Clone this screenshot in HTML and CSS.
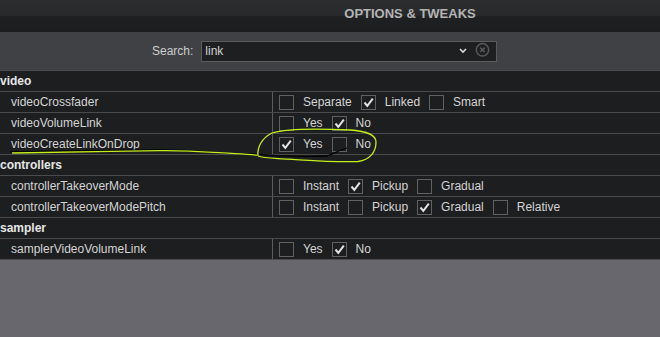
FILE: index.html
```html
<!DOCTYPE html>
<html lang="en">
<head>
    <meta charset="UTF-8">
    <meta name="viewport" content="width=device-width, initial-scale=1.0">
    <title>Options &amp; Tweaks</title>
    <link rel="stylesheet" href="styles.css">
</head>
<body>
    <div class="header">
        <span class="title">OPTIONS &amp; TWEAKS</span>
    </div>

    <div class="search">
        <label for="query" class="search-label">Search:</label>
        <div class="search-box">
            <span class="query" id="query">link</span>
            <svg class="chevron" width="8" height="19" viewBox="0 0 8 19">
                <path d="M1 7 L4 10 L7 7" fill="none" stroke="#d8d8d8" stroke-width="1.6"/>
            </svg>
            <svg class="clear" width="15" height="19" viewBox="0 0 15 19">
                <circle cx="7.5" cy="7.8" r="6.2" fill="none" stroke="#58595b" stroke-width="1.5"/>
                <path d="M5.3 5.6 L9.7 10 M9.7 5.6 L5.3 10" stroke="#58595b" stroke-width="1.6"/>
            </svg>
        </div>
    </div>

    <div class="list">
        <div class="group">video</div>
        <div class="row">
            <div class="name">videoCrossfader</div>
            <div class="opts">
                <span class="box"></span><span class="opt">Separate</span>
                <span class="box"><svg class="tick" viewBox="0 0 13 13"><path d="M2.5 6.5 L5.3 9.8 L10.8 2.6"/></svg></span><span class="opt">Linked</span>
                <span class="box"></span><span class="opt">Smart</span>
            </div>
        </div>
        <div class="row">
            <div class="name">videoVolumeLink</div>
            <div class="opts">
                <span class="box"></span><span class="opt">Yes</span>
                <span class="box"><svg class="tick" viewBox="0 0 13 13"><path d="M2.5 6.5 L5.3 9.8 L10.8 2.6"/></svg></span><span class="opt">No</span>
            </div>
        </div>
        <div class="row">
            <div class="name">videoCreateLinkOnDrop</div>
            <div class="opts">
                <span class="box"><svg class="tick" viewBox="0 0 13 13"><path d="M2.5 6.5 L5.3 9.8 L10.8 2.6"/></svg></span><span class="opt">Yes</span>
                <span class="box"></span><span class="opt">No</span>
            </div>
        </div>

        <div class="group">controllers</div>
        <div class="row">
            <div class="name">controllerTakeoverMode</div>
            <div class="opts">
                <span class="box"></span><span class="opt">Instant</span>
                <span class="box"><svg class="tick" viewBox="0 0 13 13"><path d="M2.5 6.5 L5.3 9.8 L10.8 2.6"/></svg></span><span class="opt">Pickup</span>
                <span class="box"></span><span class="opt">Gradual</span>
            </div>
        </div>
        <div class="row">
            <div class="name">controllerTakeoverModePitch</div>
            <div class="opts">
                <span class="box"></span><span class="opt">Instant</span>
                <span class="box"></span><span class="opt">Pickup</span>
                <span class="box"><svg class="tick" viewBox="0 0 13 13"><path d="M2.5 6.5 L5.3 9.8 L10.8 2.6"/></svg></span><span class="opt">Gradual</span>
                <span class="box"></span><span class="opt">Relative</span>
            </div>
        </div>

        <div class="group">sampler</div>
        <div class="row">
            <div class="name">samplerVideoVolumeLink</div>
            <div class="opts">
                <span class="box"></span><span class="opt">Yes</span>
                <span class="box"><svg class="tick" viewBox="0 0 13 13"><path d="M2.5 6.5 L5.3 9.8 L10.8 2.6"/></svg></span><span class="opt">No</span>
            </div>
        </div>
    </div>

    <!-- hand drawn marker on top of the screenshot -->
    <svg class="scribble" width="660" height="337" viewBox="0 0 660 337">
        <path class="ink-dark" d="M10 151.8 C60 151.3 120 150.5 160 150 C190 150 215 153 235 153.6 L258 154.2 C275 156 300 157 327 156 C335 153 340 150 347 148"/>
        <path class="ink" d="M12 153 C50 152.5 110 151.5 160 150.6 C190 150.2 215 152.6 235 153.6 C245 154.1 252 154.6 257 155.2"/>
        <path class="ink" d="M258 156 C257 147 262 138 272 133 C290 127.5 330 129 350 130 C365 131 376 135 376 142 C376 152 370 160 358 161.5 C330 162.5 300 159.5 278 158.6 C268 158 261 157.4 258 156"/>
    </svg>
</body>
</html>
```

FILE: styles.css
```css
body {
    margin: 0;
    width: 660px;
    height: 337px;
    overflow: hidden;
    position: relative;
    background-color: #68676d;
    font-family: "Liberation Sans", Arial, sans-serif;
    font-size: 12px;
    color: #d4d4d4;
}

.header {
    height: 32px;
    box-sizing: border-box;
    padding: 4px 0 0 160px;
    display: flex;
    justify-content: center;
    background: linear-gradient(#2c2d2f 0, #28292b 48%, #1f2021 52%, #1c1d1e 100%);
}

.title {
    font-size: 13px;
    line-height: 20px;
    font-weight: bold;
    color: #b4b4b4;
}

.search {
    height: 38px;
    box-sizing: border-box;
    padding: 9px 0 0 152px;
    display: flex;
    align-items: flex-start;
    background-color: #404145;
}

.search-label {
    line-height: 21px;
    margin-right: 8px;
    color: #cdcdcd;
}

.search-box {
    width: 296px;
    height: 21px;
    box-sizing: border-box;
    border: 1px solid #5b5c5e;
    background-color: #1e1f21;
    display: flex;
    align-items: flex-start;
    padding: 0 6px 0 3px;
}

.query {
    flex: 1;
    line-height: 19px;
    color: #d4d4d4;
}

.chevron {
    margin-right: 8px;
}

.list {
    border-top: 1px solid #4b4b4d;
    background-color: #1d1e20;
}

.group {
    height: 20px;
    line-height: 20px;
    border-bottom: 1px solid #4b4b4d;
    font-weight: bold;
    color: #e6e6e6;
}

.row {
    display: flex;
    height: 20px;
    border-bottom: 1px solid #4b4b4d;
}

.name {
    width: 273px;
    box-sizing: border-box;
    padding-left: 11px;
    line-height: 20px;
    border-right: 1px solid #5c5c5e;
}

.opts {
    display: flex;
    align-items: center;
    padding-left: 6px;
}

.box {
    width: 15px;
    height: 15px;
    box-sizing: border-box;
    border: 1px solid #606163;
    margin-right: 9px;
    margin-top: 1px;
}

.tick {
    display: block;
    width: 13px;
    height: 13px;
    fill: none;
    stroke: #e2e2e2;
    stroke-width: 2;
}

.opt {
    line-height: 20px;
    margin-right: 9px;
}

.scribble {
    position: absolute;
    top: 0;
    left: 0;
    pointer-events: none;
}

.ink {
    fill: none;
    stroke: #c4ee1c;
    stroke-width: 1.3;
}

.ink-dark {
    fill: none;
    stroke: #000;
    stroke-width: 1.3;
}
```
